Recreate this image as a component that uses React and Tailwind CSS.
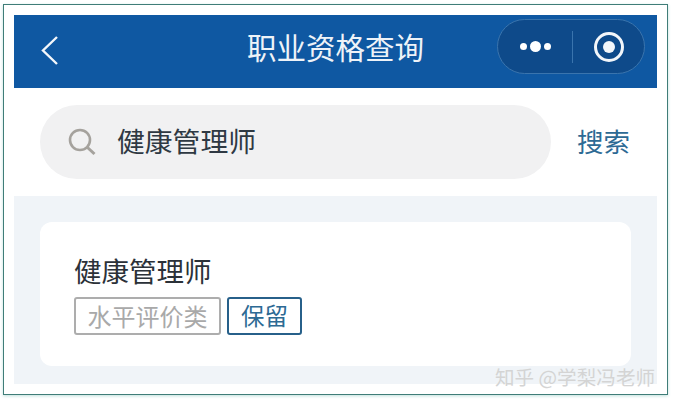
const cjk = { fontFamily: '"Noto Sans CJK SC", "Noto Sans", sans-serif' }

function Capsule() {
  return (
    <div className="flex items-center w-[148px] h-[55px] rounded-full bg-[#0e4a8a] border border-[#3a74ad]">
      <div className="w-[74px] flex items-center justify-center gap-[3px]">
        <span className="w-[7px] h-[7px] rounded-full bg-white" />
        <span className="w-[11px] h-[11px] rounded-full bg-white" />
        <span className="w-[7px] h-[7px] rounded-full bg-white" />
      </div>
      <div className="w-px h-[32px] bg-[#3a74ad]" />
      <div className="flex-1 flex items-center justify-center">
        <div className="w-[30px] h-[30px] rounded-full border-[3px] border-[#f2f6fa] flex items-center justify-center">
          <span className="w-[12px] h-[12px] rounded-full bg-[#f2f6fa]" />
        </div>
      </div>
    </div>
  )
}

export default function App() {
  return (
    <div className="relative w-[673px] h-[406px] bg-white overflow-hidden pt-[4px] pl-[3px]" style={cjk}>
      <div className="w-[665px] h-[391px] border border-[#3f7d78] shadow-[0_1px_3px_#bfe0dc] px-[10px] pt-[10px]">
        <header className="h-[73px] w-[643px] bg-[#0f58a2] flex items-start pl-[26px] pr-[12px]">
          <svg width="20" height="32" viewBox="0 0 20 32" fill="none" stroke="#f4f7fb" strokeWidth="2.4" className="shrink-0 mt-[19px]">
            <path d="M17 3 L3 16.500 L17 30" />
          </svg>
          <h1 className="ml-[187px] mt-[16px] w-[177px] text-[29.500px] leading-[30px] text-[#eef3f8] whitespace-nowrap">职业资格查询</h1>
          <div className="ml-auto mt-[4px]">
            <Capsule />
          </div>
        </header>

        <div className="h-[108px] w-[643px] flex items-center pl-[26px]">
          <div className="w-[511px] h-[74px] rounded-full bg-[#f1f1f2] flex items-center pl-[28px]">
            <svg width="28" height="28" viewBox="0 0 28 28" fill="none" stroke="#a5a29d" className="shrink-0">
              <circle cx="12" cy="12" r="10" strokeWidth="2.600" />
              <path d="M19.500 19.500 L26.500 26" strokeWidth="3" />
            </svg>
            <span className="ml-[21px] -mt-[2px] text-[27.800px] leading-none text-[#2f3943] whitespace-nowrap">健康管理师</span>
          </div>
          <button className="ml-[26px] -mt-[2px] text-[26.500px] leading-none text-[#2d6a94] whitespace-nowrap">搜索</button>
        </div>

        <section className="h-[188px] w-[643px] bg-[#f0f4f8] pt-[26px] px-[26px]">
          <div className="w-[591px] h-[144px] rounded-[12px] bg-white pt-[33px] pl-[34px]">
            <h2 className="text-[27.500px] leading-[30px] text-[#2b3138] whitespace-nowrap">健康管理师</h2>
            <div className="flex gap-[6px] mt-[12px]">
              <span className="h-[38px] w-[147px] rounded-[3px] border-2 border-[#adadad] flex items-center justify-center text-[24px] leading-none text-[#a9a9a9] whitespace-nowrap">水平评价类</span>
              <span className="h-[38px] w-[75px] rounded-[3px] border-2 border-[#27608a] flex items-center justify-center text-[23.500px] leading-none text-[#2d6a94] whitespace-nowrap">保留</span>
            </div>
          </div>
        </section>
      </div>
      {/* watermark sits over the bottom edge of the card */}
      <span className="absolute left-[495px] top-[366px] text-[19.600px] leading-[22px] text-[#d4d4d4] whitespace-nowrap">知乎 @学梨冯老师</span>
    </div>
  )
}
